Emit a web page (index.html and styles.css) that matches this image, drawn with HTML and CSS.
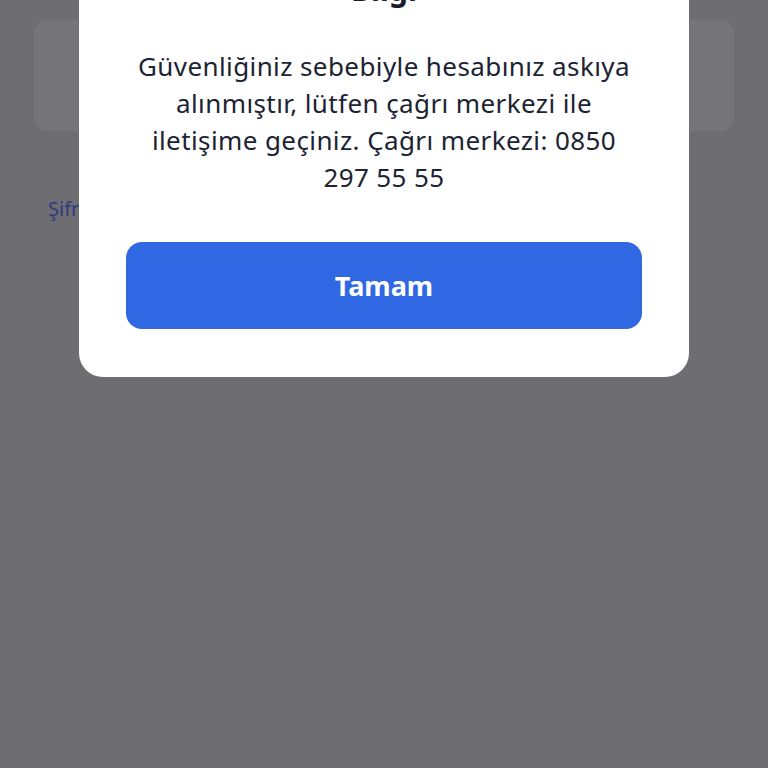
FILE: index.html
```html
<!DOCTYPE html>
<html lang="tr">
<head>
<meta charset="utf-8">
<link rel="stylesheet" href="styles.css">
</head>
<body>
<div class="page">
  <div class="card"></div>
  <a class="link">Şifremi unuttum</a>
</div>
<div class="modal">
  <h1 class="title">Bilgi</h1>
  <p class="msg">Güvenliğiniz sebebiyle hesabınız askıya alınmıştır, lütfen çağrı merkezi ile iletişime geçiniz. Çağrı merkezi: 0850 297 55 55</p>
  <button class="btn">Tamam</button>
</div>
</body>
</html>
```
FILE: styles.css
```css
html, body {
  margin: 0;
  padding: 0;
  height: 100%;
}
body {
  background: #6e6d72;
  font-family: "Noto Sans", "Open Sans", sans-serif;
  overflow: hidden;
  position: relative;
}
.page {
  padding: 20px 34px 0;
  display: flex;
  flex-direction: column;
}
.card {
  height: 111px;
  border-radius: 14px;
  background: #757478;
}
.link {
  margin-top: 64px;
  margin-left: 14px;
  font-size: 20px;
  color: #2e3a80;
}
.modal {
  position: absolute;
  left: 79px;
  width: 610px;
  top: -30px;
  background: #ffffff;
  border-radius: 24px;
  padding: 0 47px 48px;
  box-sizing: border-box;
  display: flex;
  flex-direction: column;
  align-items: stretch;
  text-align: center;
}
.title {
  margin: 0;
  font-size: 30px;
  line-height: 40px;
  font-weight: 700;
  color: #161d2e;
}
.msg {
  margin: 38px auto 0;
  max-width: 500px;
  font-size: 26px;
  letter-spacing: 0.4px;
  line-height: 37px;
  color: #1c2333;
}
.btn {
  margin-top: 46px;
  height: 87px;
  border: none;
  border-radius: 16px;
  background: #3067e3;
  color: #ffffff;
  font-family: inherit;
  font-size: 27px;
  font-weight: 700;
}
```
